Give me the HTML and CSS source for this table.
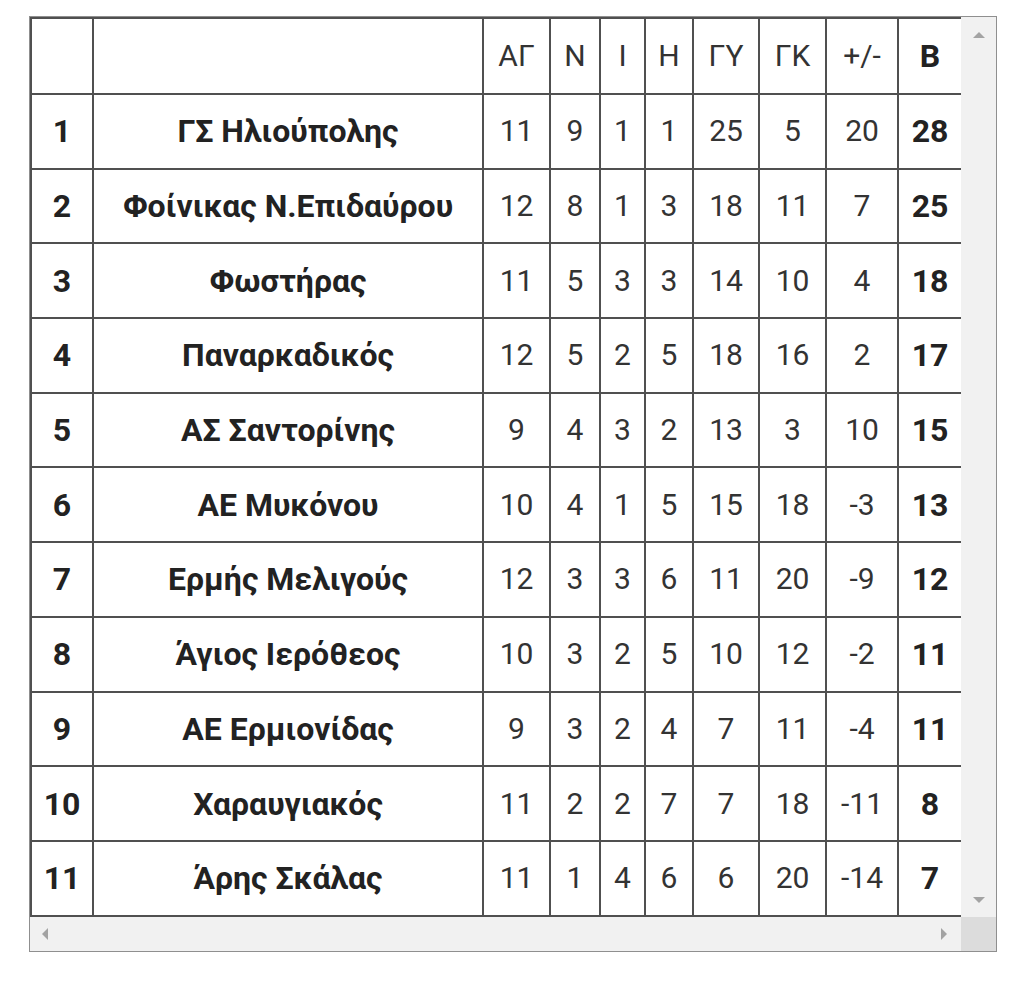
FILE: index.html
```html
<!DOCTYPE html>
<html lang="el">
<head>
<meta charset="utf-8">
<title>Βαθμολογία</title>
<link rel="stylesheet" href="styles.css">
</head>
<body>
<div class="scroller">
  <div class="viewport">
    <table class="standings">
      <colgroup>
        <col class="c-pos"><col class="c-team"><col class="c-ag"><col class="c-n"><col class="c-i"><col class="c-h"><col class="c-gy"><col class="c-gk"><col class="c-diff"><col class="c-pts">
      </colgroup>
      <thead>
        <tr><th></th><th></th><th>ΑΓ</th><th>Ν</th><th>Ι</th><th>Η</th><th>ΓΥ</th><th>ΓΚ</th><th>+/-</th><th class="pts">Β</th></tr>
      </thead>
      <tbody>
        <tr><td class="pos">1</td><td class="team">ΓΣ Ηλιούπολης</td><td>11</td><td>9</td><td>1</td><td>1</td><td>25</td><td>5</td><td>20</td><td class="pts">28</td></tr>
        <tr><td class="pos">2</td><td class="team">Φοίνικας Ν.Επιδαύρου</td><td>12</td><td>8</td><td>1</td><td>3</td><td>18</td><td>11</td><td>7</td><td class="pts">25</td></tr>
        <tr><td class="pos">3</td><td class="team">Φωστήρας</td><td>11</td><td>5</td><td>3</td><td>3</td><td>14</td><td>10</td><td>4</td><td class="pts">18</td></tr>
        <tr><td class="pos">4</td><td class="team">Παναρκαδικός</td><td>12</td><td>5</td><td>2</td><td>5</td><td>18</td><td>16</td><td>2</td><td class="pts">17</td></tr>
        <tr><td class="pos">5</td><td class="team">ΑΣ Σαντορίνης</td><td>9</td><td>4</td><td>3</td><td>2</td><td>13</td><td>3</td><td>10</td><td class="pts">15</td></tr>
        <tr><td class="pos">6</td><td class="team">ΑΕ Μυκόνου</td><td>10</td><td>4</td><td>1</td><td>5</td><td>15</td><td>18</td><td>-3</td><td class="pts">13</td></tr>
        <tr><td class="pos">7</td><td class="team">Ερμής Μελιγούς</td><td>12</td><td>3</td><td>3</td><td>6</td><td>11</td><td>20</td><td>-9</td><td class="pts">12</td></tr>
        <tr><td class="pos">8</td><td class="team">Άγιος Ιερόθεος</td><td>10</td><td>3</td><td>2</td><td>5</td><td>10</td><td>12</td><td>-2</td><td class="pts">11</td></tr>
        <tr><td class="pos">9</td><td class="team">ΑΕ Ερμιονίδας</td><td>9</td><td>3</td><td>2</td><td>4</td><td>7</td><td>11</td><td>-4</td><td class="pts">11</td></tr>
        <tr><td class="pos">10</td><td class="team">Χαραυγιακός</td><td>11</td><td>2</td><td>2</td><td>7</td><td>7</td><td>18</td><td>-11</td><td class="pts">8</td></tr>
        <tr><td class="pos">11</td><td class="team">Άρης Σκάλας</td><td>11</td><td>1</td><td>4</td><td>6</td><td>6</td><td>20</td><td>-14</td><td class="pts">7</td></tr>
      </tbody>
    </table>
  </div>
  <div class="vbar">
    <span class="arrow arrow-up"></span>
    <span class="arrow arrow-down"></span>
  </div>
  <div class="hbar">
    <span class="arrow arrow-left"></span>
    <span class="arrow arrow-right"></span>
  </div>
  <div class="corner"></div>
</div>
</body>
</html>
```
FILE: styles.css
```css
html, body {
  margin: 0;
  padding: 0;
  background: #ffffff;
}

body {
  padding: 16px 0 0 29px;
  font-family: Roboto, "Noto Sans", "Liberation Sans", sans-serif;
}

.scroller {
  display: grid;
  grid-template-columns: 931px 35px;
  grid-template-rows: 900px 34px;
  width: 966px;
  border: 1px solid #8f8f8f;
}

.viewport {
  overflow: hidden;
}

.standings {
  border-collapse: collapse;
  table-layout: fixed;
  width: 931px;
  color: #333333;
  font-size: 30px;
}

.c-pos { width: 62px; }
.c-team { width: 390px; }
.c-ag { width: 67px; }
.c-n { width: 50px; }
.c-i { width: 45px; }
.c-h { width: 48px; }
.c-gy { width: 66px; }
.c-gk { width: 67px; }
.c-diff { width: 72px; }
.c-pts { width: 64px; }

.standings th,
.standings td {
  border: 2px solid #505050;
  padding: 0;
  text-align: center;
  vertical-align: middle;
  font-weight: 400;
  line-height: 1;
}

.standings thead tr { height: 76px; }
.standings tbody tr { height: 74.7px; }

.standings .pos,
.standings .team,
.standings .pts {
  font-weight: 700;
  font-size: 32px;
  color: #222222;
}

.vbar {
  background: #f1f1f1;
  display: flex;
  flex-direction: column;
  justify-content: space-between;
  align-items: center;
  padding: 15px 0 14px;
}

.hbar {
  background: #f1f1f1;
  display: flex;
  justify-content: space-between;
  align-items: center;
  padding: 0 14px 0 12px;
}

.corner {
  background: #dcdcdc;
}

.arrow {
  display: block;
  width: 0;
  height: 0;
}

.arrow-up {
  border-left: 6px solid transparent;
  border-right: 6px solid transparent;
  border-bottom: 6px solid #a3a3a3;
}

.arrow-down {
  border-left: 6px solid transparent;
  border-right: 6px solid transparent;
  border-top: 6px solid #a3a3a3;
}

.arrow-left {
  border-top: 6px solid transparent;
  border-bottom: 6px solid transparent;
  border-right: 6px solid #a3a3a3;
}

.arrow-right {
  border-top: 6px solid transparent;
  border-bottom: 6px solid transparent;
  border-left: 6px solid #a3a3a3;
}
```
